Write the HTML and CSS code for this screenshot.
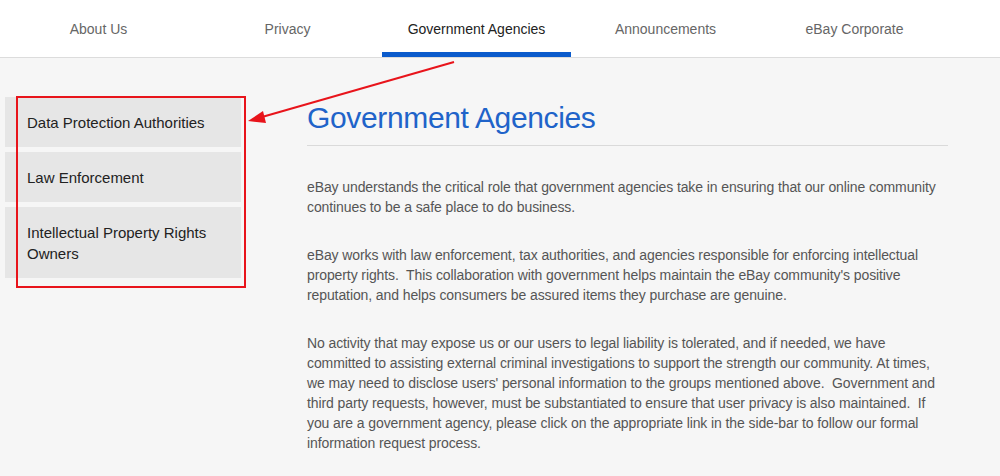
FILE: index.html
```html
<!DOCTYPE html>
<html lang="en">
<head>
<meta charset="utf-8">
<title>Government Agencies</title>
<link rel="stylesheet" href="styles.css">
</head>
<body>
<nav class="topnav">
  <div class="tabs">
    <a class="tab">About Us</a>
    <a class="tab">Privacy</a>
    <a class="tab active">Government Agencies</a>
    <a class="tab">Announcements</a>
    <a class="tab">eBay Corporate</a>
  </div>
</nav>
<div class="page">
  <aside class="sidebar">
    <a class="side-item">Data Protection Authorities</a>
    <a class="side-item">Law Enforcement</a>
    <a class="side-item">Intellectual Property Rights Owners</a>
  </aside>
  <main class="content">
    <h1 class="title">Government Agencies</h1>
    <p>eBay understands the critical role that government agencies take in ensuring that our online community continues to be a safe place to do business.</p>
    <p>eBay works with law enforcement, tax authorities, and agencies responsible for enforcing intellectual property rights.&nbsp; This collaboration with government helps maintain the eBay community's positive reputation, and helps consumers be assured items they purchase are genuine.</p>
    <p>No activity that may expose us or our users to legal liability is tolerated, and if needed, we have committed to assisting external criminal investigations to support the strength our community. At times, we may need to disclose users' personal information to the groups mentioned above.&nbsp; Government and third party requests, however, must be substantiated to ensure that user privacy is also maintained.&nbsp; If you are a government agency, please click on the appropriate link in the side-bar to follow our formal information request process.</p>
  </main>
</div>
<div class="annot-box"></div>
<svg class="annot-arrow" width="1000" height="476" viewBox="0 0 1000 476">
  <line x1="454" y1="62" x2="262" y2="117" stroke="#e8141b" stroke-width="2"/>
  <polygon points="248,121 263,111 266,123" fill="#e8141b"/>
</svg>
</body>
</html>
```
FILE: styles.css
```css
html, body {
  margin: 0;
  padding: 0;
}
body {
  background: #f6f6f6;
  font-family: "Liberation Sans", Arial, sans-serif;
  height: 476px;
  overflow: hidden;
  position: relative;
}
.topnav {
  background: #fff;
  border-bottom: 1px solid #dcdcdc;
  height: 57px;
}
.tabs {
  display: flex;
  padding-left: 4px;
  height: 57px;
}
.tab {
  width: 189px;
  box-sizing: border-box;
  text-align: center;
  font-size: 14px;
  color: #666;
  padding-top: 21px;
  height: 57px;
  border-bottom: 5px solid transparent;
}
.tab.active {
  color: #222;
  border-bottom-color: #0b5bcc;
}
.page {
  display: flex;
  padding-left: 5px;
}
.sidebar {
  width: 236px;
  margin-top: 39px;
  display: flex;
  flex-direction: column;
  gap: 5px;
}
.side-item {
  display: block;
  background: #e6e6e6;
  padding: 15px 22px 14px;
  font-size: 15px;
  line-height: 21px;
  color: #222;
}
.content {
  width: 641px;
  margin-left: 66px;
  margin-top: 40px;
}
.title {
  margin: 0;
  font-size: 30px;
  font-weight: normal;
  letter-spacing: -0.35px;
  color: #2063c9;
  line-height: 40px;
  padding-bottom: 7px;
  border-bottom: 1px solid #dadada;
}
.content p {
  margin: 31px 0 0;
  font-size: 14px;
  line-height: 20px;
  letter-spacing: -0.1px;
  color: #555;
}
.content p + p {
  margin-top: 28px;
}
.annot-box {
  position: absolute;
  left: 16px;
  top: 96px;
  width: 226px;
  height: 188px;
  border: 2px solid #e8141b;
}
.annot-arrow {
  position: absolute;
  left: 0;
  top: 0;
}
```
